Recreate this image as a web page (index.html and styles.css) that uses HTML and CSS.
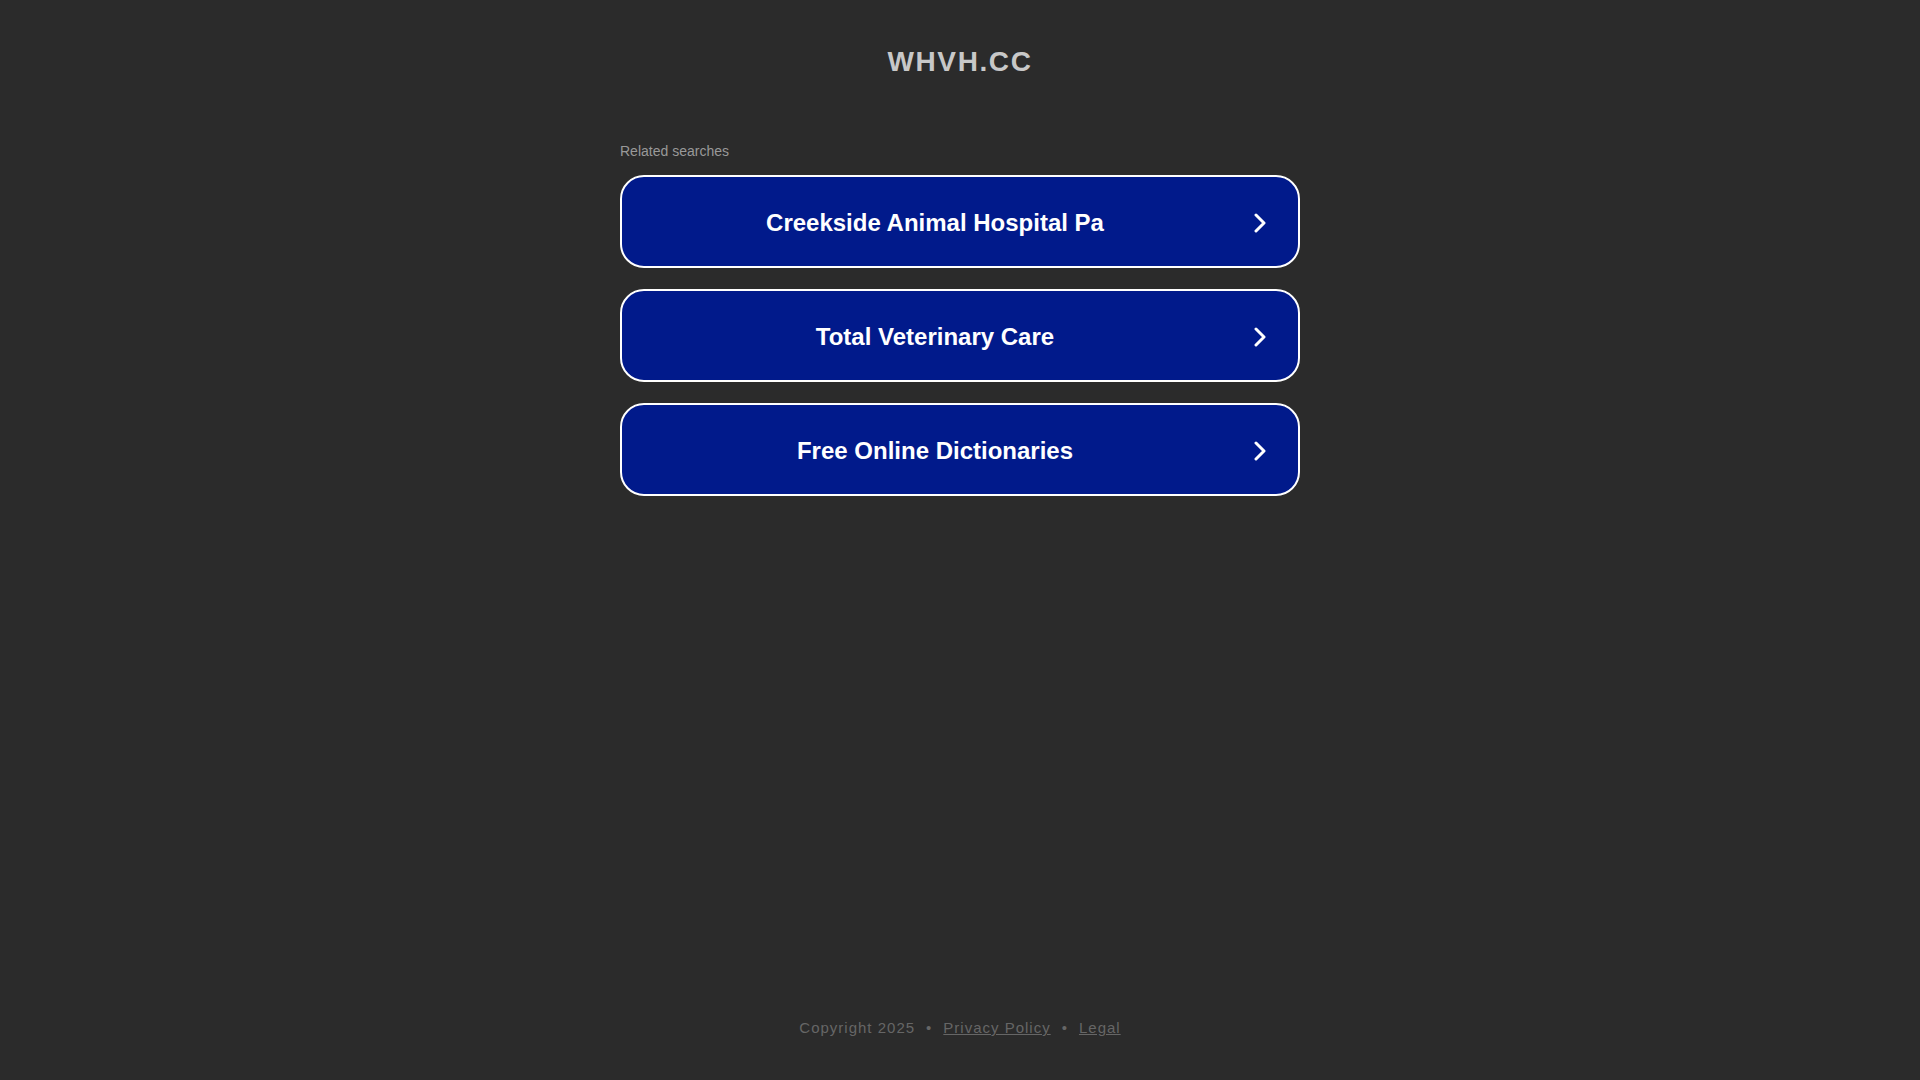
FILE: index.html
```html
<!DOCTYPE html>
<html lang="en">
<head>
<meta charset="utf-8">
<title>whvh.cc</title>
<link rel="stylesheet" href="styles.css">
</head>
<body>
<div class="page">
  <header class="header">
    <h1 class="domain">whvh.cc</h1>
  </header>
  <main class="main">
    <div class="related">Related searches</div>
    <div class="list">
      <a class="item" href="#"><span class="label">Creekside Animal Hospital Pa</span><svg class="chev" viewBox="0 0 14 20" width="14" height="20"><path d="M3 2 L11 10 L3 18" fill="none" stroke="#fff" stroke-width="3" stroke-linecap="round" stroke-linejoin="round"/></svg></a>
      <a class="item" href="#"><span class="label">Total Veterinary Care</span><svg class="chev" viewBox="0 0 14 20" width="14" height="20"><path d="M3 2 L11 10 L3 18" fill="none" stroke="#fff" stroke-width="3" stroke-linecap="round" stroke-linejoin="round"/></svg></a>
      <a class="item" href="#"><span class="label">Free Online Dictionaries</span><svg class="chev" viewBox="0 0 14 20" width="14" height="20"><path d="M3 2 L11 10 L3 18" fill="none" stroke="#fff" stroke-width="3" stroke-linecap="round" stroke-linejoin="round"/></svg></a>
    </div>
  </main>
  <footer class="footer">
    <span>Copyright 2025</span><span class="dot">•</span><a href="#">Privacy Policy</a><span class="dot">•</span><a href="#">Legal</a>
  </footer>
</div>
</body>
</html>
```

FILE: styles.css
```css
html, body {
  margin: 0;
  padding: 0;
  background: #2b2b2b;
  font-family: "Liberation Sans", Arial, sans-serif;
}
.page {
  min-height: 1080px;
  display: flex;
  flex-direction: column;
  align-items: center;
}
.header {
  padding-top: 45px;
}
.domain {
  margin: 0;
  font-size: 28px;
  line-height: 34px;
  font-weight: bold;
  text-transform: uppercase;
  letter-spacing: 1.6px;
  color: #c8c8c8;
}
.main {
  width: 680px;
  margin-top: 64px;
}
.related {
  font-size: 14px;
  line-height: 16px;
  color: #999;
  margin-bottom: 16px;
}
.list {
  display: flex;
  flex-direction: column;
  gap: 21px;
}
.item {
  height: 93px;
  box-sizing: border-box;
  border: 2px solid #fff;
  border-radius: 24px;
  background: #011a8b;
  color: #fff;
  text-decoration: none;
  display: flex;
  align-items: center;
  padding: 2px 31px 0 15px;
}
.label {
  flex: 1;
  text-align: center;
  font-size: 24px;
  font-weight: bold;
}
.chev {
  margin-left: 20px;
  display: block;
}
.footer {
  margin-top: auto;
  padding-bottom: 44px;
  font-size: 15px;
  letter-spacing: 1px;
  color: #666;
}
.footer a {
  color: #666;
  text-decoration: underline;
}
.dot {
  margin: 0 11px;
}
```
